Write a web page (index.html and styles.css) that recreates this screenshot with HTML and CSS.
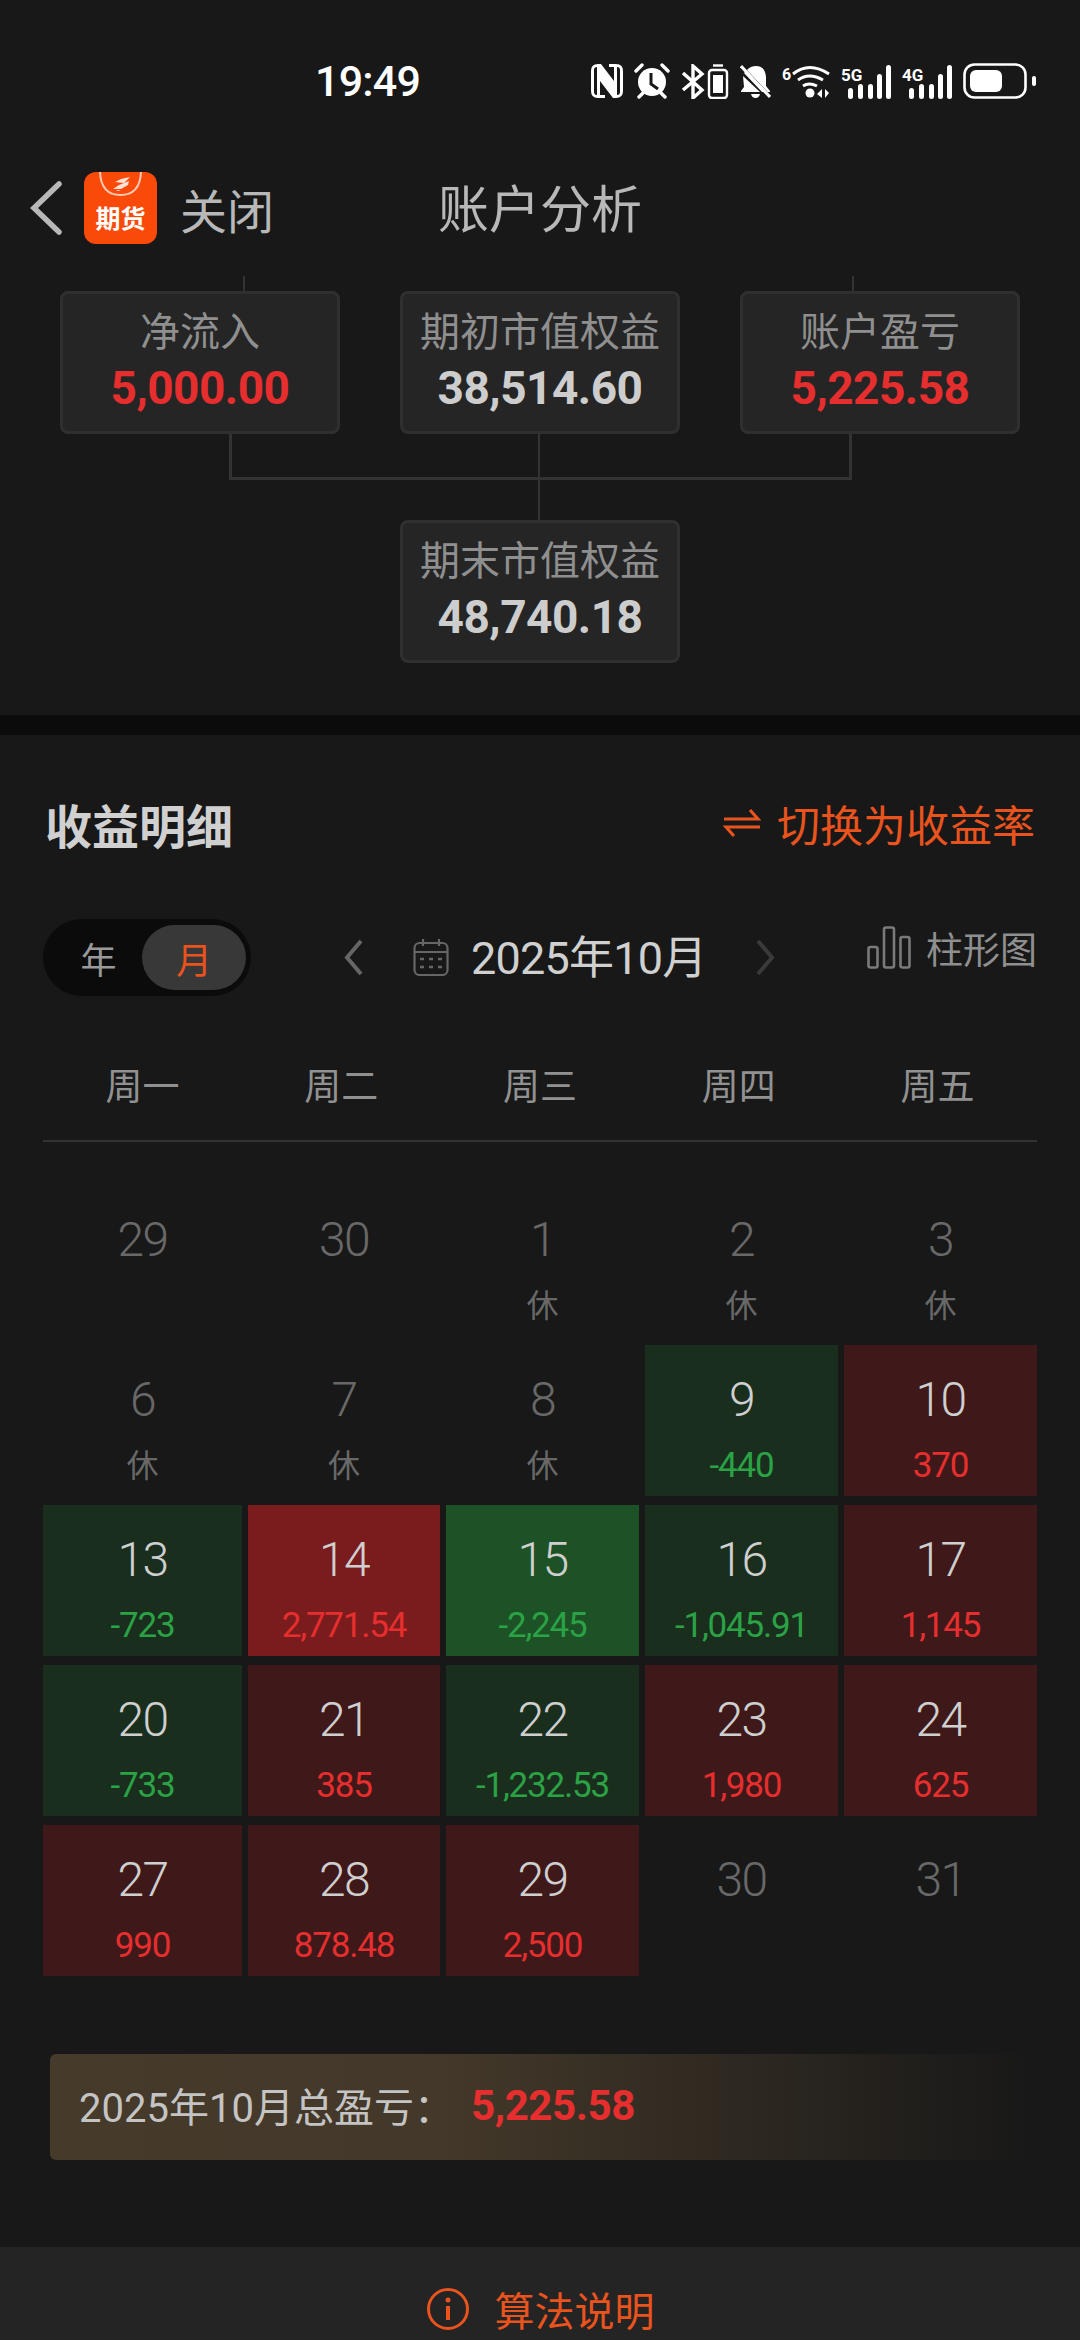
FILE: index.html
```html
<!DOCTYPE html>
<html lang="zh-CN">
<head>
  <meta charset="UTF-8" />
  <title>账户分析</title>
  <link rel="stylesheet" href="styles.css">
</head>
<body>

<div class="status-bar">
  <span class="clock">19:49</span>
  <div class="status-icons">
    <svg width="32" height="34" viewBox="0 0 32 34"><path fill="#fff" fill-rule="evenodd" d="M7 0h3l13 17V3h-5V0h7q7 0 7 7v20q0 7-7 7h-3L9 17v14h5v3H7q-7 0-7-7V7q0-7 7-7zM3 6v22q0 3 3 3V3Q3 3 3 6zm26 22V6q0-3-3-3v28q3 0 3-3z"/></svg>
    <svg class="alarm" width="36" height="36" viewBox="0 0 36 36" fill="none" stroke="#fff"><circle cx="18" cy="19" r="14" fill="#fff" stroke="none"/><path stroke="#181818" stroke-width="3" d="M17 10v11l7 5"/><path stroke-width="3.400" stroke-linecap="round" d="M2 8l6-6M34 8l-6-6M5 34l4-4M31 34l-4-4"/></svg>
    <svg class="bt" width="48" height="35" viewBox="0 0 48 35" fill="none" stroke="#fff"><path stroke-width="3.400" d="M2 9l19 17-9 8V2l9 8L2 26"/><rect x="28" y="6" width="18" height="28" rx="3" stroke-width="2.400"/><rect x="32" y="11" width="10" height="18" fill="#fff" stroke="none"/><path stroke-width="2.400" d="M32 1.500h10"/></svg>
    <svg width="31" height="35" viewBox="0 0 31 35"><path fill="#fff" d="M8 5q3-3 8-3 9 0 10 11v9l4 5v1H22L4 9zM3 12L20 28H1v-1l3-4zM11 30h9q-1 4-4.500 4T11 30z"/><path stroke="#181818" stroke-width="2" d="M0 0l30 32"/><path stroke="#fff" stroke-width="3" d="M1 2l29 31"/></svg>
    <svg class="wifi" width="48" height="35" viewBox="0 0 48 35" fill="none" stroke="#fff"><text x="0" y="16" class="net-text" fill="#fff" stroke="none" font-size="16">6</text><path stroke-width="3" d="M11 10q16-13 36 0M16 16q11-8 25 0M21 22q6-4 14 0"/><circle cx="28" cy="29" r="4.500" fill="#fff" stroke="none"/><path fill="#fff" stroke="none" d="M40 25v9l-5-4zM43 25v9l4-5z"/></svg>
    <svg class="sig" width="50" height="35" viewBox="0 0 50 35"><text x="0" y="17" class="net-text" fill="#fff" font-size="17">5G</text><g fill="#fff"><rect x="7" y="24" width="5" height="11" rx="2.500"/><rect x="17" y="20" width="5" height="15" rx="2.500"/><rect x="27" y="20" width="5" height="15" rx="2.500"/><rect x="36" y="10" width="5" height="25" rx="2.500"/><rect x="45" y="1" width="5" height="34" rx="2.500"/></g></svg>
    <svg class="sig" width="50" height="35" viewBox="0 0 50 35"><text x="0" y="17" class="net-text" fill="#fff" font-size="17">4G</text><g fill="#fff"><rect x="7" y="24" width="5" height="11" rx="2.500"/><rect x="17" y="20" width="5" height="15" rx="2.500"/><rect x="27" y="20" width="5" height="15" rx="2.500"/><rect x="36" y="10" width="5" height="25" rx="2.500"/><rect x="45" y="1" width="5" height="34" rx="2.500"/></g></svg>
    <svg class="batt" width="73" height="36" viewBox="0 0 73 36" fill="none"><rect x="1.500" y="1.500" width="61" height="33" rx="10" stroke="#fff" stroke-width="2.600"/><rect x="7" y="7" width="32" height="22" rx="6" fill="#fff"/><rect x="69" y="13" width="4" height="10" rx="2" fill="#fff"/></svg>
  </div>
</div>

<header class="app-header">
  <div class="header-left">
    <svg class="back" width="33" height="54" viewBox="0 0 33 54" fill="none"><path stroke="#b8b8b8" stroke-width="5.500" stroke-linecap="round" d="M29 3L4 27l25 24"/></svg>
    <div class="logo">
      <svg width="73" height="32" viewBox="0 0 73 32" fill="none"><path stroke="#ffc9b3" stroke-width="2" d="M16 0q1 23 20.500 23T57 0"/><path fill="#ffe3d8" d="M46 5l-9 2-6 3 9 1zM45 9l-1 4-7 4-8 0 6-4zM32 18l5 0-3 1z"/></svg>
      <span>期货</span>
    </div>
    <span class="close-label">关闭</span>
  </div>
  <h1 class="header-title">账户分析</h1>
  <div></div>
</header>

<section class="tree">
  <!-- connector lines of the diagram -->
  <i class="line stub-l"></i>
  <i class="line stub-r"></i>
  <i class="line drop-l"></i>
  <i class="line drop-r"></i>
  <i class="line drop-m"></i>
  <i class="line join"></i>

  <div class="tree-row">
    <div class="box"><span class="box-label">净流入</span><b class="box-value red">5,000.00</b></div>
    <div class="box"><span class="box-label">期初市值权益</span><b class="box-value">38,514.60</b></div>
    <div class="box"><span class="box-label">账户盈亏</span><b class="box-value red">5,225.58</b></div>
  </div>
  <div class="tree-row second">
    <div class="box"><span class="box-label">期末市值权益</span><b class="box-value">48,740.18</b></div>
  </div>
</section>

<div class="section-gap"></div>

<section class="detail">
  <div class="title-row">
    <h2 class="detail-title">收益明细</h2>
    <div class="switch-link">
      <svg width="38" height="30" viewBox="0 0 38 30" fill="none"><path stroke="#e9531d" stroke-width="3.200" d="M1 11h34L27 2M37 19H3l8 9"/></svg>
      <span>切换为收益率</span>
    </div>
  </div>

  <div class="toolbar">
    <div class="toggle">
      <span class="toggle-item">年</span>
      <span class="toggle-item active">月</span>
    </div>
    <div class="month-nav">
      <svg width="21" height="37" viewBox="0 0 21 37" fill="none"><path stroke="#666" stroke-width="4" d="M18 2L4 18.500 18 35"/></svg>
      <svg class="cal" width="36" height="37" viewBox="0 0 36 37" fill="none" stroke="#666" stroke-width="2.200"><rect x="1.500" y="4" width="33" height="32" rx="5"/><path d="M1.500 13h33M10 0v7M26 0v7"/><path stroke-width="2.600" d="M7 20h4M16 20h4M25 20h4M7 28h4M16 28h4M25 28h4"/></svg>
      <span class="month-label">2025年10月</span>
      <svg class="next" width="21" height="37" viewBox="0 0 21 37" fill="none"><path stroke="#3a3a3a" stroke-width="4" d="M3 2l14 16.500L3 35"/></svg>
    </div>
    <div class="chart-link">
      <svg width="44" height="43" viewBox="0 0 44 43" fill="none" stroke="#7a7a7a" stroke-width="2.600"><rect x="1.500" y="21" width="9" height="20.500" rx="2"/><rect x="17" y="1.500" width="10" height="40" rx="2"/><rect x="33.500" y="11" width="9" height="30.500" rx="2"/></svg>
      <span>柱形图</span>
    </div>
  </div>

  <div class="week-row">
    <span>周一</span><span>周二</span><span>周三</span><span>周四</span><span>周五</span>
  </div>

  <div class="cal-grid">
    <div class="cell off"><span class="day">29</span></div>
    <div class="cell off"><span class="day">30</span></div>
    <div class="cell off"><span class="day">1</span><span class="rest">休</span></div>
    <div class="cell off"><span class="day">2</span><span class="rest">休</span></div>
    <div class="cell off"><span class="day">3</span><span class="rest">休</span></div>

    <div class="cell off"><span class="day">6</span><span class="rest">休</span></div>
    <div class="cell off"><span class="day">7</span><span class="rest">休</span></div>
    <div class="cell off"><span class="day">8</span><span class="rest">休</span></div>
    <div class="cell loss"><span class="day">9</span><span class="val">-440</span></div>
    <div class="cell gain"><span class="day">10</span><span class="val">370</span></div>

    <div class="cell loss"><span class="day">13</span><span class="val">-723</span></div>
    <div class="cell gain-hi"><span class="day">14</span><span class="val">2,771.54</span></div>
    <div class="cell loss-hi"><span class="day">15</span><span class="val">-2,245</span></div>
    <div class="cell loss"><span class="day">16</span><span class="val">-1,045.91</span></div>
    <div class="cell gain"><span class="day">17</span><span class="val">1,145</span></div>

    <div class="cell loss"><span class="day">20</span><span class="val">-733</span></div>
    <div class="cell gain"><span class="day">21</span><span class="val">385</span></div>
    <div class="cell loss"><span class="day">22</span><span class="val">-1,232.53</span></div>
    <div class="cell gain"><span class="day">23</span><span class="val">1,980</span></div>
    <div class="cell gain"><span class="day">24</span><span class="val">625</span></div>

    <div class="cell gain"><span class="day">27</span><span class="val">990</span></div>
    <div class="cell gain"><span class="day">28</span><span class="val">878.48</span></div>
    <div class="cell gain"><span class="day">29</span><span class="val">2,500</span></div>
    <div class="cell off"><span class="day">30</span></div>
    <div class="cell off"><span class="day">31</span></div>
  </div>

  <div class="summary">
    <span class="summary-label">2025年10月总盈亏：</span>
    <b class="summary-value">5,225.58</b>
  </div>
</section>

<footer class="algo-bar">
  <svg width="44" height="44" viewBox="0 0 44 44" fill="none"><circle cx="22" cy="22" r="19.500" stroke="#e9531d" stroke-width="3"/><circle cx="22" cy="13" r="2.500" fill="#e9531d"/><path stroke="#e9531d" stroke-width="4" d="M22 19v14"/></svg>
  <span>算法说明</span>
</footer>

</body>
</html>
```

FILE: styles.css
```css
html, body {
  margin: 0;
  padding: 0;
  width: 1080px;
  height: 2340px;
  overflow: hidden;
  background: #181818;
  color: #cfcfcf;
  font-family: Roboto, "Noto Sans CJK SC", sans-serif;
}

/* status bar */
.status-bar {
  height: 162px;
  display: flex;
  align-items: center;
  justify-content: space-between;
  padding: 0 44px 0 315px;
  box-sizing: border-box;
}
.clock {
  font-size: 43px;
  font-weight: 500;
  color: #fff;
  letter-spacing: -0.8px;
}
.status-icons {
  display: flex;
  align-items: center;
  gap: 11px;
}
.net-text {
  font-family: Roboto, sans-serif;
  font-weight: 700;
}

/* app header */
.app-header {
  height: 92px;
  display: grid;
  grid-template-columns: 1fr auto 1fr;
  align-items: center;
}
.header-left {
  display: flex;
  align-items: center;
  padding-left: 30px;
}
.back { margin-right: 21px; }
.logo {
  width: 73px;
  height: 72px;
  background: #fa4a0a;
  border-radius: 12px;
  overflow: hidden;
  display: flex;
  flex-direction: column;
  align-items: center;
  color: #fff;
  font-size: 25px;
  font-weight: 700;
  line-height: 28px;
}
.logo svg { flex: none; margin-bottom: 2px; }
.close-label {
  margin-left: 23px;
  font-size: 47px;
  color: #b8b8b8;
}
.header-title {
  margin: 0 0 5px;
  font-size: 51px;
  font-weight: 400;
  color: #b8b8b8;
}

/* flow diagram */
.tree {
  position: relative;
  height: 461px;
  box-sizing: border-box;
  padding-top: 37px;
}
.tree-row {
  display: flex;
  justify-content: center;
  gap: 60px;
}
.tree-row.second { margin-top: 86px; }
.box {
  width: 280px;
  height: 143px;
  box-sizing: border-box;
  background: #252525;
  border: 3px solid #2f2f2f;
  border-radius: 8px;
  display: flex;
  flex-direction: column;
  align-items: center;
  padding-top: 12px;
}
.box-label {
  font-size: 40px;
  line-height: 54px;
  color: #8f8f8f;
}
.box-value {
  font-size: 46px;
  line-height: 56px;
  font-weight: 700;
  letter-spacing: -0.5px;
  color: #cdcdcd;
}
.red { color: #e62e2e; }

.line {
  position: absolute;
  background: #333;
}
.stub-l { left: 243px; top: 22px; width: 2px; height: 15px; }
.stub-r { left: 852px; top: 22px; width: 2px; height: 15px; }
.drop-l { left: 229px; top: 180px; width: 3px; height: 46px; }
.drop-r { left: 849px; top: 180px; width: 3px; height: 46px; }
.drop-m { left: 538px; top: 180px; width: 2px; height: 86px; }
.join { left: 229px; top: 223px; width: 623px; height: 3px; }

.section-gap {
  height: 20px;
  background: #0b0b0b;
}

/* earnings detail */
.detail { padding: 56px 43px 0; }
.title-row {
  height: 64px;
  display: flex;
  align-items: center;
  justify-content: space-between;
  padding: 0 2px;
}
.detail-title {
  margin: 0;
  font-size: 47px;
  font-weight: 700;
  color: #d0d0d0;
}
.switch-link {
  display: flex;
  align-items: center;
  gap: 16px;
  font-size: 43px;
  color: #e9531d;
}

.toolbar {
  margin-top: 64px;
  height: 77px;
  display: flex;
  align-items: center;
}
.toggle {
  width: 208px;
  height: 77px;
  box-sizing: border-box;
  background: #0b0b0b;
  border-radius: 39px;
  padding: 6px 5px 6px 12px;
  display: flex;
  font-size: 36px;
  color: #9a9a9a;
}
.toggle-item {
  flex: 1;
  display: flex;
  align-items: center;
  justify-content: center;
}
.toggle-item.active {
  flex: none;
  width: 104px;
  background: #383838;
  border-radius: 33px;
  color: #e9531d;
}
.month-nav {
  margin-left: 92px;
  display: flex;
  align-items: center;
}
.cal { margin-left: 49px; }
.month-label {
  margin: 0 0 6px 22px;
  font-size: 45px;
  color: #d0d0d0;
  letter-spacing: -0.8px;
}
.next { margin-left: 49px; }
.chart-link {
  margin-left: auto;
  margin-top: -20px;
  display: flex;
  align-items: center;
  gap: 15px;
  font-size: 37px;
  color: #8f8f8f;
}

.week-row {
  display: grid;
  grid-template-columns: repeat(5, 1fr);
  margin-top: 54px;
  padding-bottom: 14px;
  border-bottom: 2px solid #333;
  font-size: 37px;
  line-height: 76px;
  color: #919191;
  text-align: center;
}

.cal-grid {
  display: grid;
  grid-template-columns: 199px 192px 193px 193px 193px;
  column-gap: 6px;
  margin-top: 43px;
  row-gap: 9px;
}
.cell {
  height: 151px;
  display: flex;
  flex-direction: column;
  align-items: center;
  padding-top: 30px;
  box-sizing: border-box;
}
.day {
  font-size: 48px;
  font-weight: 300;
  line-height: 50px;
  letter-spacing: -1.5px;
  color: #cfcfcf;
}
.val, .rest {
  margin-top: 20px;
  line-height: 42px;
}
.val {
  font-size: 35px;
  letter-spacing: -1.2px;
}
.rest {
  font-size: 32px;
  color: #686868;
}
.off .day { color: #686868; }
.loss { background: #1a2e1e; }
.loss-hi { background: #1d5226; }
.gain { background: #3f191a; }
.gain-hi { background: #7a1c1d; }
.loss .val, .loss-hi .val { color: #2aa245; }
.gain .val, .gain-hi .val { color: #e62e2e; }

.summary {
  margin: 78px 0 0 7px;
  height: 106px;
  box-sizing: border-box;
  padding-left: 29px;
  border-radius: 6px 0 0 6px;
  background: linear-gradient(to right, #463b2b 0%, #433829 40%, #181818 100%);
  display: flex;
  align-items: center;
}
.summary-label {
  width: 392px;
  margin-bottom: 4px;
  font-size: 40px;
  color: #c4c4c4;
  white-space: nowrap;
}
.summary-value {
  margin-bottom: 3px;
  font-size: 42px;
  font-weight: 700;
  letter-spacing: -0.4px;
  color: #e62e2e;
}

.algo-bar {
  margin-top: 87px;
  height: 94px;
  box-sizing: border-box;
  padding-top: 30px;
  background: #242424;
  display: flex;
  align-items: center;
  justify-content: center;
  gap: 25px;
  font-size: 40px;
  color: #e9531d;
}
```
